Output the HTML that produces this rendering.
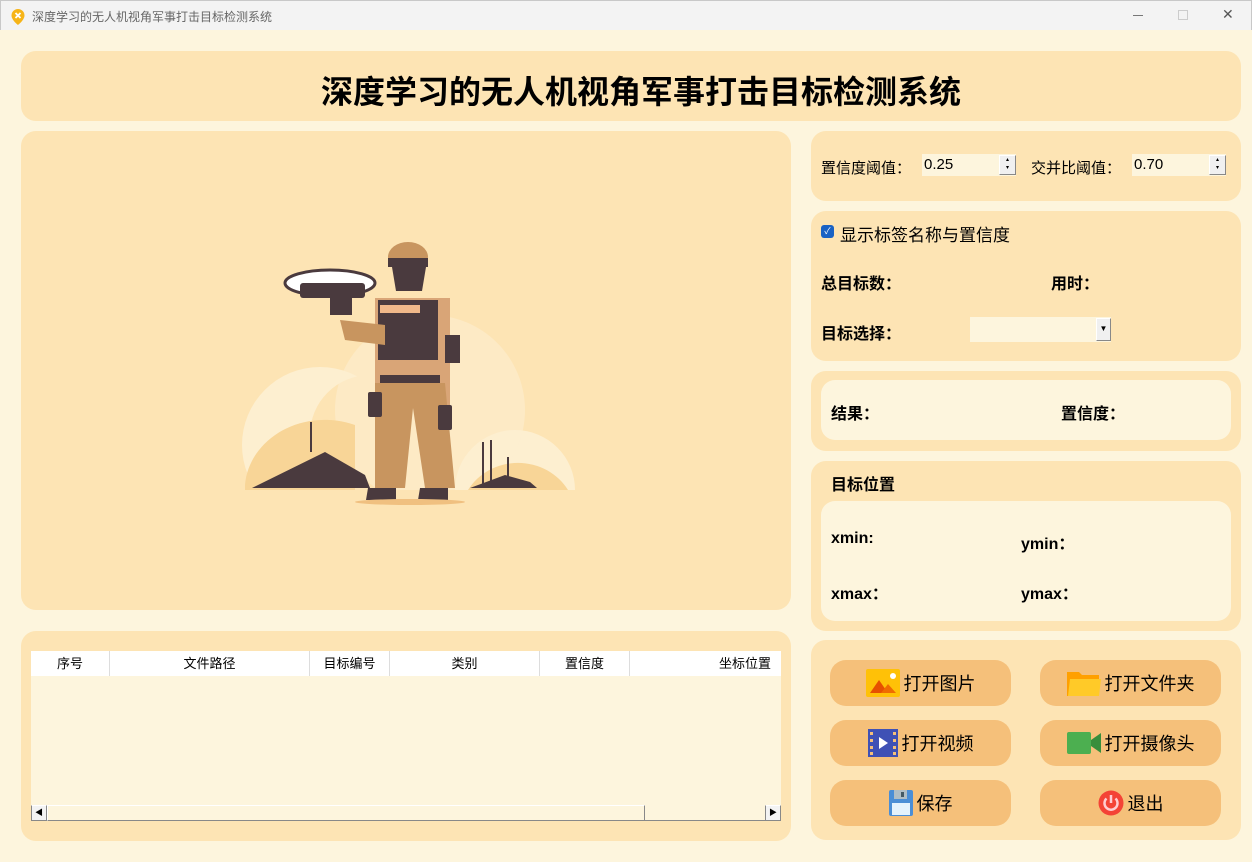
<!DOCTYPE html>
<html><head><meta charset="utf-8"><style>
*{margin:0;padding:0;box-sizing:border-box}
body{width:1252px;height:862px;background:#fdf5dd;font-family:"Liberation Sans","Noto Sans CJK SC",sans-serif;position:relative;overflow:hidden;color:#000}
.a{position:absolute}
.tb{left:0;top:0;width:1252px;height:30px;background:#f3f3f3;border:1px solid #c8c8c8;border-bottom:none}
.p{position:absolute;background:#fde4b4;border-radius:15px}
.in{position:absolute;background:#fdf5dd;border-radius:14px}
.b{font-weight:bold;font-size:16px}
.btn{position:absolute;width:181px;height:46px;background:#f5c07a;border-radius:16px;display:flex;align-items:center;justify-content:center;font-size:18px;gap:4px}
.th{position:absolute;top:651px;height:25px;background:#fff;border-right:1px solid #ddd;font-size:13px;text-align:center;line-height:25px}
.spin{position:absolute;width:17px;height:20px;background:#f0f0f0;border:1px solid #888;border-top-color:#fff;border-left-color:#fff;font-size:6px;line-height:8px;text-align:center;color:#000}
</style></head><body>
<div class="a tb">
 <svg class="a" style="left:9px;top:7px" width="16" height="18" viewBox="0 0 16 18"><path d="M8 1a6.5 6.5 0 0 1 6.5 6.5C14.5 12 8 17 8 17S1.5 12 1.5 7.5A6.5 6.5 0 0 1 8 1z" fill="#f6b418"/><path d="M5.5 5l5 5M10.5 5l-5 5" stroke="#fff" stroke-width="1.8"/></svg>
 <div class="a" style="left:31px;top:7px;font-size:12px;color:#666">深度学习的无人机视角军事打击目标检测系统</div>
 <div class="a" style="left:1132px;top:14px;width:10px;height:1px;background:#777"></div>
 <div class="a" style="left:1177px;top:9px;width:10px;height:10px;border:1px solid #ccc"></div>
 <div class="a" style="left:1221px;top:5px;font-size:14px;color:#555">✕</div>
</div>
<div class="p" style="left:21px;top:51px;width:1220px;height:70px"></div>
<div class="a" style="left:41px;top:67px;width:1200px;text-align:center;font-size:32px;font-weight:bold">深度学习的无人机视角军事打击目标检测系统</div>

<div class="p" style="left:21px;top:131px;width:770px;height:479px"></div>
<svg class="a" style="left:230px;top:220px" width="380" height="290" viewBox="0 0 380 290">
 <circle cx="90" cy="225" r="78" fill="#fdefd0"/>
 <circle cx="140" cy="215" r="60" fill="#fde4b4"/>
 <circle cx="285" cy="270" r="60" fill="#fdefd0"/>
 <circle cx="200" cy="190" r="95" fill="#fdefd0" opacity=".6"/>
 <rect x="0" y="270" width="380" height="20" fill="#fde4b4"/>
 <path d="M15 265a80 70 0 0 1 110-60L125 270H15z" fill="#f8d597"/>
 <path d="M238 270a58 55 0 0 1 100 0z" fill="#f8d597"/>
 <path d="M22 268L95 232L135 255L140 268z" fill="#4a3a3e"/>
 <path d="M240 268L275 255L300 262L307 268z" fill="#4a3a3e"/>
 <rect x="80" y="202" width="2" height="30" fill="#4a3a3e"/>
 <rect x="252" y="222" width="2" height="45" fill="#4a3a3e"/><rect x="260" y="220" width="2" height="47" fill="#4a3a3e"/><rect x="277" y="237" width="2" height="30" fill="#4a3a3e"/>
 <ellipse cx="100" cy="63" rx="45" ry="13" fill="#fff" stroke="#4a3a3e" stroke-width="3"/>
 <rect x="70" y="63" width="65" height="15" rx="3" fill="#4a3a3e"/>
 <rect x="100" y="75" width="22" height="20" fill="#4a3a3e"/>
 <ellipse cx="178" cy="37" rx="20" ry="15" fill="#c8955f"/>
 <rect x="158" y="38" width="40" height="9" fill="#4a3a3e"/>
 <path d="M162 47h34l-4 24h-26z" fill="#4a3a3e"/>
 <path d="M145 78h75v110h-75z" fill="#d9a577"/>
 <path d="M148 80h60v60h-60z" fill="#4a3a3e"/>
 <rect x="150" y="85" width="40" height="8" fill="#f0b88a"/>
 <path d="M110 100l45 5l0 20l-40-5z" fill="#c8955f"/>
 <rect x="150" y="155" width="60" height="8" fill="#4a3a3e"/>
 <path d="M145 163h70l10 105h-30l-12-80l-8 80h-30z" fill="#c8955f"/>
 <rect x="138" y="172" width="14" height="25" rx="2" fill="#4a3a3e"/>
 <rect x="208" y="185" width="14" height="25" rx="2" fill="#4a3a3e"/>
 <rect x="215" y="115" width="15" height="28" fill="#4a3a3e"/>
 <path d="M138 268h28v12h-30zM190 268h28v12h-30z" fill="#4a3a3e"/>
 <ellipse cx="180" cy="282" rx="55" ry="3" fill="#f0c080"/>
</svg>

<div class="p" style="left:21px;top:631px;width:770px;height:210px"></div>
<div class="a" style="left:31px;top:676px;width:750px;height:130px;background:#fdf5dd"></div>
<div class="th" style="left:31px;width:79px">序号</div>
<div class="th" style="left:110px;width:200px">文件路径</div>
<div class="th" style="left:310px;width:80px">目标编号</div>
<div class="th" style="left:390px;width:150px">类别</div>
<div class="th" style="left:540px;width:90px">置信度</div>
<div class="th" style="left:630px;width:151px;text-align:right;padding-right:10px;border-right:none">坐标位置</div>
<div class="a" style="left:31px;top:805px;width:750px;height:16px;background:#fdf5dd;border-bottom:1px solid #888"></div>
<div class="a" style="left:31px;top:805px;width:16px;height:16px;border:1px solid #888;border-top-color:#fff;font-size:8px;line-height:14px;text-align:center;background:#f3f3f3">◀</div>
<div class="a" style="left:47px;top:805px;width:598px;height:16px;border:1px solid #888;border-top-color:#fff;border-left-color:#fff;background:#fdf5dd"></div>
<div class="a" style="left:765px;top:805px;width:16px;height:16px;border:1px solid #888;border-top-color:#fff;font-size:8px;line-height:14px;text-align:center;background:#f3f3f3">▶</div>

<div class="p" style="left:811px;top:131px;width:430px;height:70px"></div>
<div class="a" style="left:821px;top:157px;font-size:15px">置信度阈值：</div>
<div class="a" style="left:922px;top:154px;width:94px;height:22px;background:#fdf5dd;font-size:15px;padding:2px 2px">0.25</div>
<div class="spin" style="left:999px;top:155px">▴<br>▾</div>
<div class="a" style="left:1031px;top:157px;font-size:15px">交并比阈值：</div>
<div class="a" style="left:1132px;top:154px;width:94px;height:22px;background:#fdf5dd;font-size:15px;padding:2px 2px">0.70</div>
<div class="spin" style="left:1209px;top:155px">▴<br>▾</div>

<div class="p" style="left:811px;top:211px;width:430px;height:150px"></div>
<div class="a" style="left:821px;top:225px;width:13px;height:13px;background:#1a62c4;border-radius:3px;color:#fff;font-size:9px;text-align:center;line-height:13px">✓</div>
<div class="a" style="left:840px;top:221px;font-size:17px">显示标签名称与置信度</div>
<div class="a b" style="left:821px;top:270px">总目标数：</div>
<div class="a b" style="left:1051px;top:270px">用时：</div>
<div class="a b" style="left:821px;top:320px">目标选择：</div>
<div class="a" style="left:970px;top:317px;width:141px;height:25px;background:#fdf5dd"></div>
<div class="a" style="left:1096px;top:318px;width:15px;height:23px;background:#f0f0f0;border:1px solid #888;border-top-color:#fff;border-left-color:#fff;font-size:8px;text-align:center;line-height:20px">▼</div>

<div class="p" style="left:811px;top:371px;width:430px;height:80px"></div>
<div class="in" style="left:821px;top:380px;width:410px;height:60px"></div>
<div class="a b" style="left:831px;top:400px">结果：</div>
<div class="a b" style="left:1061px;top:400px">置信度：</div>

<div class="p" style="left:811px;top:461px;width:430px;height:170px"></div>
<div class="a b" style="left:831px;top:471px">目标位置</div>
<div class="in" style="left:821px;top:501px;width:410px;height:120px"></div>
<div class="a b" style="left:831px;top:530px">xmin:</div>
<div class="a b" style="left:1021px;top:530px">ymin：</div>
<div class="a b" style="left:831px;top:580px">xmax：</div>
<div class="a b" style="left:1021px;top:580px">ymax：</div>

<div class="p" style="left:811px;top:640px;width:430px;height:200px"></div>
<div class="btn" style="left:830px;top:660px"><svg width="34" height="28" viewBox="0 0 34 28"><rect width="34" height="28" rx="2" fill="#ffc107"/><path d="M4 24L13 11L22 24z" fill="#e65100"/><path d="M15 24L22 15L30 24z" fill="#ef6c00"/><circle cx="27" cy="7" r="3" fill="#fff"/></svg>打开图片</div>
<div class="btn" style="left:1040px;top:660px"><svg width="34" height="28" viewBox="0 0 34 28"><path d="M0 3h12l3 3h17v21H0z" fill="#ffa000"/><path d="M3 10h31l-2 17H1z" fill="#ffca28"/></svg>打开文件夹</div>
<div class="btn" style="left:830px;top:720px"><svg width="30" height="28" viewBox="0 0 30 28"><rect width="30" height="28" fill="#3f51b5"/><g fill="#f5c07a"><rect x="2" y="3" width="3" height="3"/><rect x="2" y="10" width="3" height="3"/><rect x="2" y="17" width="3" height="3"/><rect x="2" y="23" width="3" height="3"/><rect x="25" y="3" width="3" height="3"/><rect x="25" y="10" width="3" height="3"/><rect x="25" y="17" width="3" height="3"/><rect x="25" y="23" width="3" height="3"/></g><path d="M11 8l9 6l-9 6z" fill="#fff"/></svg>打开视频</div>
<div class="btn" style="left:1040px;top:720px"><svg width="34" height="22" viewBox="0 0 34 22"><rect width="24" height="22" rx="2" fill="#4caf50"/><path d="M24 8l10-7v20l-10-7z" fill="#388e3c"/></svg>打开摄像头</div>
<div class="btn" style="left:830px;top:780px"><svg width="24" height="26" viewBox="0 0 24 26"><rect width="24" height="26" rx="2" fill="#4a8ed6"/><rect x="5" y="0" width="13" height="9" fill="#b0bec5"/><rect x="12" y="2" width="3" height="5" fill="#455a64"/><rect x="3" y="13" width="18" height="12" fill="#e3f2fd"/></svg>保存</div>
<div class="btn" style="left:1040px;top:780px"><svg width="26" height="26" viewBox="0 0 26 26"><circle cx="13" cy="13" r="12.5" fill="#f44336"/><path d="M8.5 8.5a6.5 6.5 0 1 0 9 0" stroke="#ffcdd2" stroke-width="2.5" fill="none"/><path d="M13 5v8" stroke="#ffcdd2" stroke-width="2.5"/></svg>退出</div>
</body></html>
